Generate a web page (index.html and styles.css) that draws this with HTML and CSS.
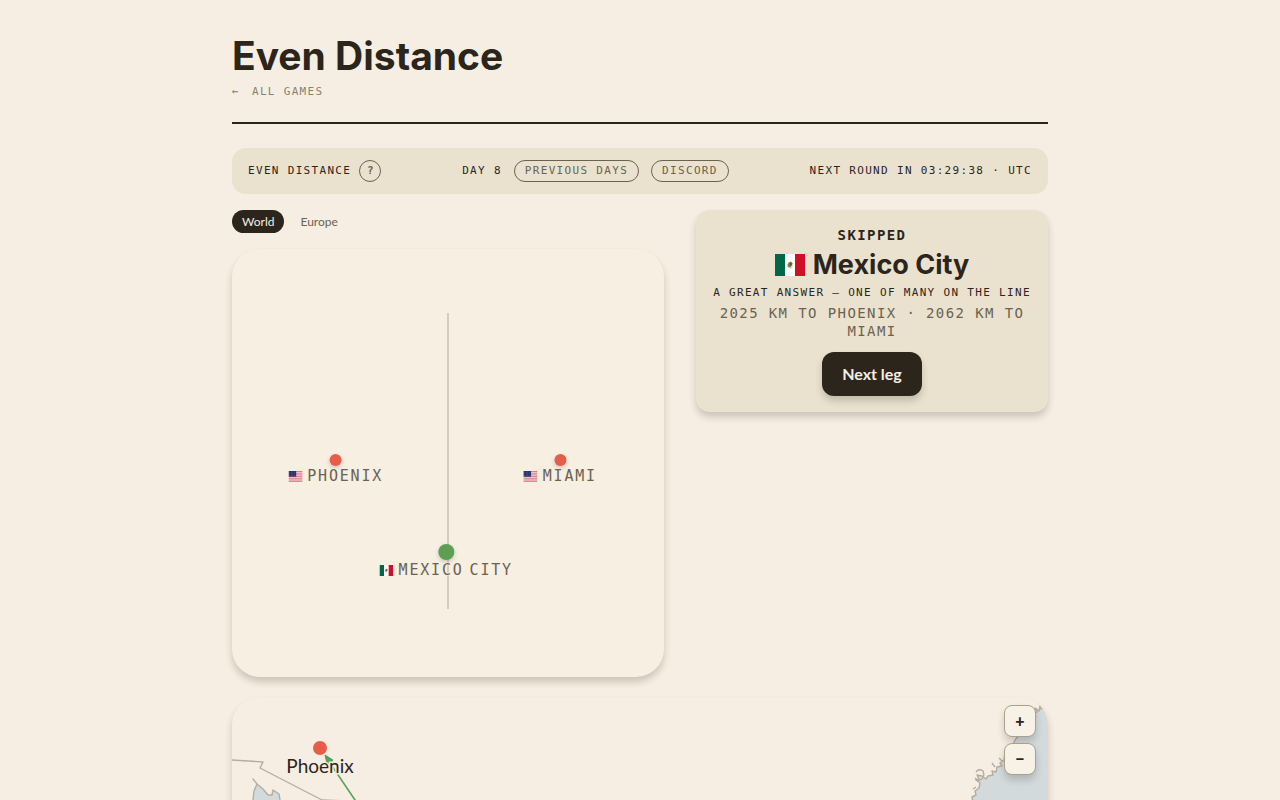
FILE: index.html
```html
<!DOCTYPE html>
<html lang="en">
<head>
<meta charset="utf-8">
<meta name="viewport" content="width=device-width, initial-scale=1">
<title>Even Distance</title>
<link rel="stylesheet" href="styles.css">
</head>
<body>
<svg class="defs" aria-hidden="true">
  <symbol id="flag-mx" viewBox="0 0 30 22" preserveAspectRatio="none">
    <rect width="30" height="22" fill="#fff"/><rect width="10" height="22" fill="#006847"/><rect x="20" width="10" height="22" fill="#ce1126"/>
    <path d="M12.3 12.2q2.7 3.5 5.4 0" fill="none" stroke="#8fb088" stroke-width=".8"/>
    <path d="M12.4 11l1.2-2.6 2.4-.9 1.4 1.7-.3 2.3-2 1.8-1.7-.5z" fill="#8b6d3f"/><path d="M15 9l1.8.8-.8 2z" fill="#3d4a37"/>
  </symbol>
  <symbol id="flag-us" viewBox="0 0 14 11" preserveAspectRatio="none">
    <rect width="14" height="11" fill="#f5dfdf"/>
    <path d="M0 .5h14M0 2.2h14M0 3.9h14M0 5.6h14M0 7.3h14M0 9h14M0 10.6h14" stroke="#d86a78" stroke-width=".85"/>
    <rect width="7.6" height="5.7" fill="#26346b"/>
    <path d="M1 1.3h6M1 2.9h6M1 4.5h6" stroke="#8d95b6" stroke-width=".5" stroke-dasharray=".5 1"/>
  </symbol>
</svg>
<div class="page">
  <header class="masthead">
    <h1>Even Distance</h1>
    <a class="back" href="#"><span>←</span><span>All games</span></a>
  </header>

  <div class="bar">
    <div class="bar-group bar-name"><span>Even Distance</span><button class="help" type="button" aria-label="How to play">?</button></div>
    <div class="bar-group"><span>Day 8</span><button class="pill" type="button">Previous days</button><a class="pill" href="#">Discord</a></div>
    <div>Next round in 03:29:38 · UTC</div>
  </div>

  <main>
    <div class="columns">
      <section>
        <div class="tabs"><button class="tab active" type="button">World</button><button class="tab" type="button">Europe</button></div>
        <div class="board">
          <div class="line"></div>
          <div class="pin phoenix"><i class="dot"></i><span class="place"><svg class="flag"><use href="#flag-us"/></svg><span>Phoenix</span></span></div>
          <div class="pin miami"><i class="dot"></i><span class="place"><svg class="flag"><use href="#flag-us"/></svg><span>Miami</span></span></div>
          <div class="pin mexico"><i class="dot"></i><span class="place"><svg class="flag"><use href="#flag-mx"/></svg><span>Mexico</span><span>City</span></span></div>
        </div>
      </section>
      <aside class="result">
        <p class="status">Skipped</p>
        <h2><svg class="flag-large"><use href="#flag-mx"/></svg>Mexico City</h2>
        <p class="note">A great answer — one of many on the line</p>
        <p class="distance">2025 km to Phoenix · 2062 km to Miami</p>
        <button class="next" type="button">Next leg</button>
      </aside>
    </div>

    <section class="map">
      <svg class="terrain" viewBox="0 0 816 460" role="img" aria-label="Map of Phoenix and Mexico City">
        <g stroke="#b5ada0" stroke-width="1.4" stroke-linejoin="round">
          <path d="M21 82l4 5 6 5 5 6h4l1-5 6 4 1 6 18 42 22 48 20 48-12 8-28-48-24-50-23-48 1-9 3-7z" fill="#d3dadc"/>
          <path d="M812 9l-3 3-1-3-1 5-4-3 2 4-4 2 3 2-5 5-5 6-6 7-5 6-4 9-6 5-1 6-4 3 2 3-5 1-1 5-4-1 1 4-5 1-2 3-4-3-5-1 2 4-3 1 4 3-1 5-4 3 1 4-4 2 1 5-3 4 1 5-8 30-6 45 8 70 30 60h86V12z" fill="#d3dadc"/>
          <path d="M0 63l31 2-3 6 62 32 48 2 46 58 42 2 36 64 55 35" fill="none"/>
          <path d="M744 75q3-4 7-1 2 5-1 8-4 3-7-1M760 66l3 4M767 61l3 3M741 92l3-2" fill="none"/>
        </g>
        <path d="M98 66l144 213" fill="none" stroke="#5d9f52" stroke-width="1.5"/>
        <path d="M93 58l8 5-5 4-1 0z" fill="#5d9f52" stroke="#5d9f52" stroke-width="1"/>
        <circle cx="88" cy="51" r="7" fill="#e85d4a"/>
        <text class="city" x="88" y="76">Phoenix</text>
      </svg>
      <div class="zoom"><button type="button" aria-label="Zoom in">+</button><button type="button" aria-label="Zoom out">−</button></div>
    </section>
  </main>
</div>
</body>
</html>
```
FILE: styles.css
```css
:root {
  --ink: #2c251c;
  --paper: #f6eee2;
  --sand: #eae2ce;
  --muted: #6b6250;
  --mono: "DejaVu Sans Mono", "Liberation Mono", monospace;
  --sans: Lato, "Open Sans", sans-serif;
  --shadow: 0 5px 7px rgba(44, 36, 28, .2);
}
* { box-sizing: border-box; }
body { margin: 0; background: var(--paper); color: var(--ink); font-family: var(--sans); }
h1, h2, p { margin: 0; }
button { font: inherit; color: inherit; letter-spacing: inherit; text-transform: inherit; cursor: pointer; }
.defs { position: absolute; width: 0; height: 0; }
.page { max-width: 864px; margin: 0 auto; padding: 32px 24px; }

.masthead { display: flex; flex-direction: column; align-items: flex-start; padding-bottom: 23px; margin-bottom: 24px; border-bottom: 2px solid var(--ink); }
h1 { font: 700 39px/47px Inter, sans-serif; }
.back, .bar, .note { font: 11px/14px var(--mono); letter-spacing: .12em; text-transform: uppercase; }
.back { display: flex; gap: 12px; margin-top: 6px; color: #8b8170; text-decoration: none; }

.bar { display: flex; flex-wrap: wrap; justify-content: space-between; align-items: center; gap: 12px; padding: 12px 16px; margin-bottom: 16px; border-radius: 14px; background: var(--sand); }
.bar-group { display: flex; align-items: center; gap: 12px; }
.bar-name { gap: 8px; }
.help { width: 22px; height: 22px; padding: 0; border: 1px solid var(--muted); border-radius: 50%; background: none; color: var(--muted); font-weight: 700; letter-spacing: 0; }
.pill { padding: 3px 10px; border: 1px solid var(--muted); border-radius: 11px; background: none; color: var(--muted); line-height: 14px; text-decoration: none; }

.columns { display: grid; grid-template-columns: 27fr 22fr; gap: 32px; align-items: start; margin-bottom: 20px; }
.tabs { display: flex; gap: 6px; margin-bottom: 16px; font-size: 12px; }
.tab { padding: 4px 10px; border: 0; border-radius: 12px; background: none; color: var(--muted); line-height: 15px; }
.tab.active { background: var(--ink); color: var(--paper); }

.board { position: relative; aspect-ratio: 432 / 428; border-radius: 28px; background: #f6efe2; box-shadow: var(--shadow); }
.line { position: absolute; left: 50%; top: 15%; width: 2px; height: 69%; margin-left: -1px; background: #d4ccbf; }
.pin { position: absolute; display: flex; flex-direction: column; align-items: center; transform: translateX(-50%); }
.phoenix { left: 24%; top: 48%; }
.miami { left: 76%; top: 48%; }
.mexico { left: 49.6%; top: 69%; }
.dot { width: 12px; height: 12px; border-radius: 50%; background: #e85d4a; box-shadow: 0 2px 4px rgba(44, 36, 28, .2); }
.mexico .dot { width: 16px; height: 16px; background: #5d9f52; }
.place { display: flex; align-items: center; gap: 5px; color: var(--muted); font: 15px/20px var(--mono); letter-spacing: .12em; text-transform: uppercase; text-shadow: 0 0 2px var(--paper), 0 0 2px var(--paper), 0 0 2px var(--paper); }
.place span + span { padding-left: 1px; }
.flag { width: 14px; height: 11px; }

.result { display: flex; flex-direction: column; align-items: center; padding: 16px; border-radius: 14px; background: var(--sand); box-shadow: var(--shadow); text-align: center; }
.status, .distance { font: 14px/18px var(--mono); letter-spacing: .1em; text-transform: uppercase; }
.status { font-weight: 700; }
.distance { margin-top: 4px; color: var(--muted); }
h2 { display: flex; align-items: center; gap: 8px; margin: 4px 0; font: 700 27px/34px Inter, sans-serif; }
.flag-large { width: 30px; height: 22px; }
.next { margin-top: 12px; padding: 12px 20px; border: 0; border-radius: 12px; background: var(--ink); color: var(--paper); font: 700 16px/20px var(--sans); box-shadow: var(--shadow); }

.map { position: relative; overflow: hidden; border-radius: 28px; box-shadow: var(--shadow); }
.terrain { display: block; width: 100%; }
.city { font: 19px var(--sans); fill: var(--ink); text-anchor: middle; stroke: var(--paper); stroke-width: 3px; paint-order: stroke; }
.zoom { position: absolute; top: 8px; right: 12px; display: flex; flex-direction: column; gap: 6px; }
.zoom button { width: 32px; height: 32px; padding: 0; border: 1px solid #aaa08f; border-radius: 8px; background: #f7f1e6; box-shadow: var(--shadow); font: 900 16px/20px var(--sans); }
```
